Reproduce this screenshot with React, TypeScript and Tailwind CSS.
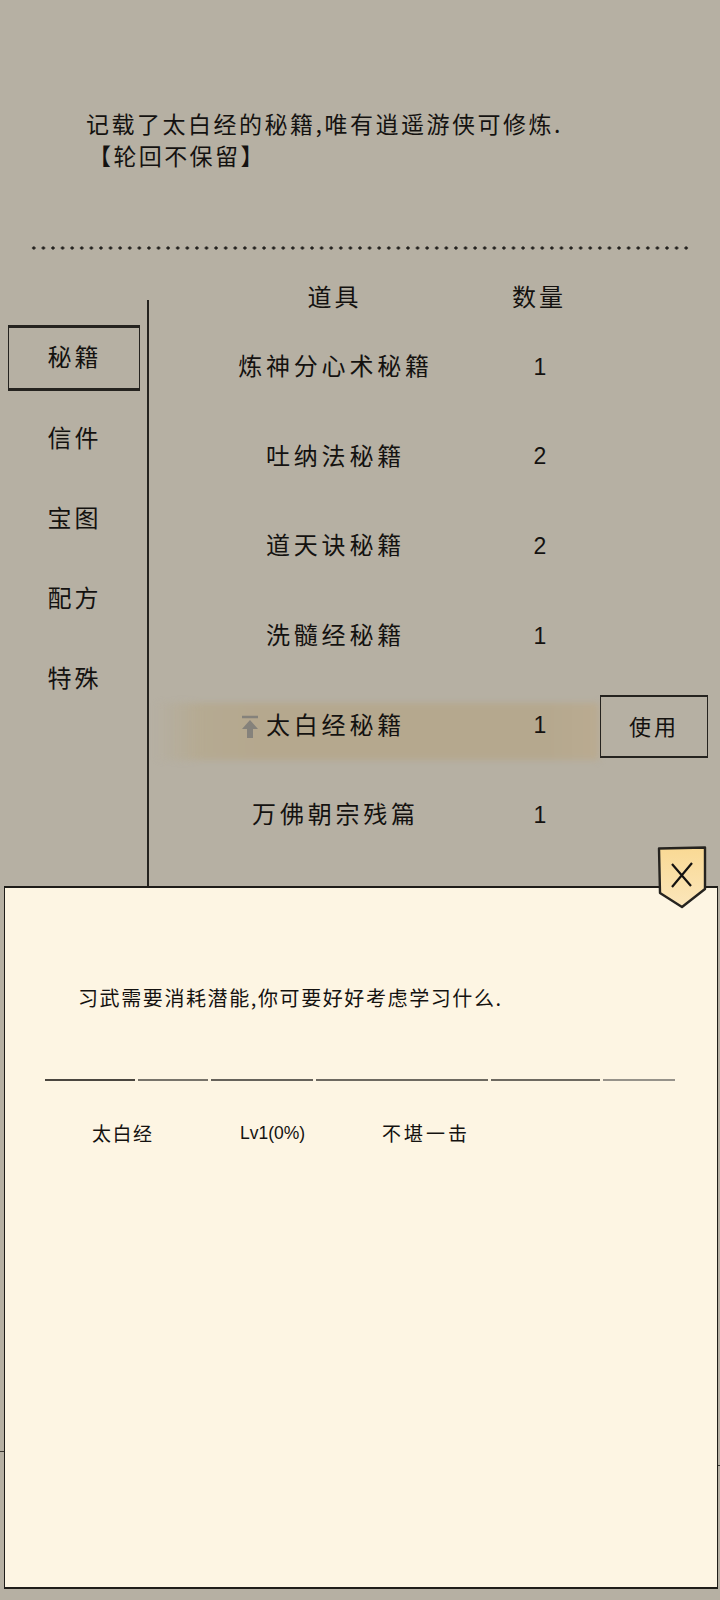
import React from "react";

const tabs = ["秘籍", "信件", "宝图", "配方", "特殊"];
const items = [
  { name: "炼神分心术秘籍", qty: "1" },
  { name: "吐纳法秘籍", qty: "2" },
  { name: "道天诀秘籍", qty: "2" },
  { name: "洗髓经秘籍", qty: "1" },
  { name: "太白经秘籍", qty: "1", active: true },
  { name: "万佛朝宗残篇", qty: "1" },
];
const segments = [
  "w-[90px] bg-[#4a463f]",
  "w-[70px] bg-[#77736a]",
  "w-[102px] bg-[#66625a]",
  "w-[172px] bg-[#6d6960]",
  "w-[109px] bg-[#6d6960]",
  "w-[72px] bg-[#96928a]",
];

export default function App() {
  return (
    <div className="relative h-[1600px] w-[720px] overflow-hidden bg-[#b6b0a3] text-[#141210] font-['Noto_Sans_CJK_SC',sans-serif]">
      <div className="h-[246px] pl-[86px] pt-[107px] text-[23px] leading-[32px] tracking-[2.5px]">
        <p>记载了太白经的秘籍,唯有逍遥游侠可修炼.</p>
        <p className="ml-[2px] tracking-[2.4px]">【轮回不保留】</p>
      </div>

      <div className="mx-[29px] h-[4px] bg-[radial-gradient(circle,#23211e_1.4px,transparent_1.8px)] bg-size-[9.6px_4px]" />

      <div className="flex pt-[22px]">
        <div className="mt-[28px] h-[587px] w-[149px] shrink-0 border-r-2 border-[#25231f] pl-[8px] pr-[7px] pt-[25px]">
          <div className="flex flex-col">
            {tabs.map((tab, i) => (
              <div
                key={tab}
                className={
                  i === 0
                    ? "mb-[14px] flex h-[66px] items-center justify-center border border-b-[3px] border-t-[3px] border-[#25231f] pb-[4px] pl-[1px] text-[24px] tracking-[3px]"
                    : "mb-[14px] flex h-[66px] items-center justify-center pb-[2px] pl-[1px] text-[24px] tracking-[3px]"
                }
              >
                {tab}
              </div>
            ))}
          </div>
        </div>

        <div className="min-w-0 flex-1">
          <div className="flex h-[48px] items-start pt-[6px] text-[24px] leading-[36px] tracking-[3px]">
            <div className="w-[370px] pl-[1px] text-center">道具</div>
            <div className="flex w-[40px] justify-center whitespace-nowrap">数量</div>
          </div>
          {items.map((item) => (
            <div key={item.name} className="relative flex h-[89.7px] items-center text-[24px] tracking-[3.8px]">
              {item.active && (
                <div className="absolute left-[6px] top-[24px] h-[57px] w-[444px] bg-[linear-gradient(90deg,transparent,#b5aa92_10%,#b5a88e_24%,#b5a88e_88%,#baab91)] blur-[3px]" />
              )}
              <div className="relative flex w-[370px] justify-center pl-[3px]">
                <span className="relative">
                  {item.active && (
                    <svg className="absolute -left-[25px] top-[9px]" width="18" height="24" viewBox="0 0 18 24" aria-hidden="true">
                      <path d="M1 2h16" stroke="#85827b" strokeWidth="2.5" />
                      <path d="M9 5 17 14h-5v9H6v-9H1z" fill="#85827b" />
                    </svg>
                  )}
                  {item.name}
                </span>
              </div>
              <div className="relative w-[40px] pl-[2px] pt-[4px] text-center font-['Liberation_Sans',sans-serif] text-[23px] tracking-normal">{item.qty}</div>
              {item.active && (
                <button className="relative ml-[41px] mt-[6px] flex h-[63px] w-[108px] items-center justify-center border border-t-2 border-b-2 border-[#25231f] pb-[3px] text-[22px] tracking-[3px]">
                  使用
                </button>
              )}
            </div>
          ))}
        </div>
      </div>

      <div className="absolute left-[4px] top-[886px] h-[703px] w-[714px] border border-t-2 border-b-2 border-[#1f1d19] bg-[#fdf5e3] pl-[73px] pt-[91px]">
        <p className="text-[20px] leading-[38px] tracking-[1.6px]">习武需要消耗潜能,你可要好好考虑学习什么.</p>
        <div className="-ml-[33px] mt-[62px] flex h-[2px] gap-[3px]">
          {segments.map((s, i) => (
            <div key={i} className={`h-[2px] ${s}`} />
          ))}
        </div>
        <div className="mt-[35px] flex h-[34px] items-center text-[19px] tracking-[1.5px]">
          <span className="ml-[14px] w-[148px]">太白经</span>
          <span className="w-[142px] font-['Liberation_Sans',sans-serif] text-[17.5px] tracking-[0px]">Lv1(0%)</span>
          <span className="tracking-[3px]">不堪一击</span>
        </div>
      </div>

      <svg className="absolute left-[657px] top-[846px]" width="50" height="63" viewBox="0 0 50 63" aria-hidden="true">
        <defs>
          <linearGradient id="tagFill" x1="0" y1="0" x2="0" y2="1">
            <stop offset="0" stopColor="#f9d994" />
            <stop offset="1" stopColor="#fbe6bb" />
          </linearGradient>
        </defs>
        <path d="M2 2.5 48 1.5 48 43 25 61 3 47z" fill="url(#tagFill)" stroke="#25231f" strokeWidth="2.4" strokeLinejoin="round" />
        <path d="M15 18 34 40M35 17 15 41" stroke="#141210" strokeWidth="2.2" fill="none" />
      </svg>

      <div className="absolute left-0 top-[1451px] h-px w-[4px] bg-[#3a3832]" />
      <div className="absolute right-0 top-[1465px] h-px w-[2px] bg-[#3a3832]" />
    </div>
  );
}
